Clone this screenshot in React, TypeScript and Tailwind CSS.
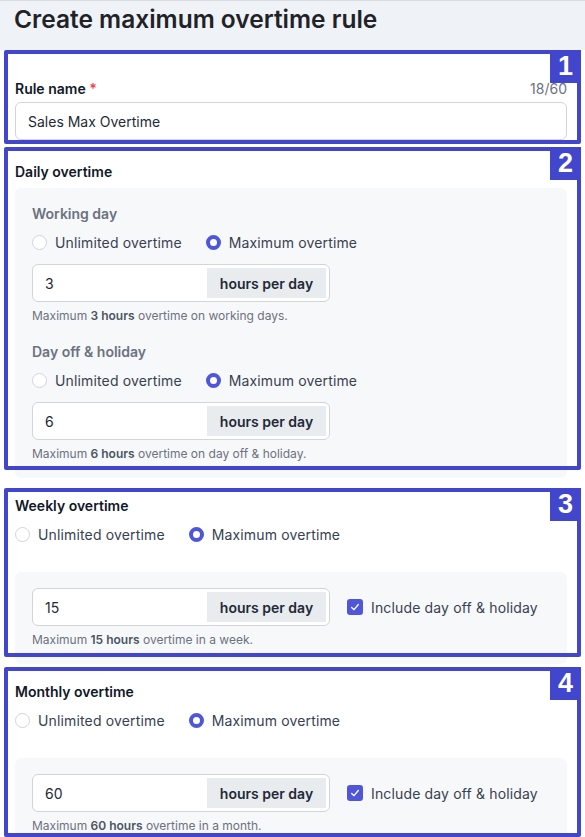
import React from 'react'

const Radio = ({ checked, label }: { checked?: boolean; label: string }) => (
  <label className="flex items-center gap-[8px] text-[14px] tracking-[0.15px] text-[#374151]">
    {checked ? (
      <span className="w-[15px] h-[15px] rounded-full border-[4.5px] border-[#4f56d9] bg-white" />
    ) : (
      <span className="w-[15px] h-[15px] rounded-full border border-[#d1d5db] bg-white" />
    )}
    {label}
  </label>
)

const RadioRow = () => (
  <div className="flex items-center gap-[24px] h-[20px]">
    <Radio label="Unlimited overtime" />
    <Radio checked label="Maximum overtime" />
  </div>
)

const HoursInput = ({ value }: { value: string }) => (
  <div className="flex items-stretch w-[298px] h-[38px] bg-white border border-[#d1d5db] rounded-[6px] p-[3px] pl-0">
    <div className="flex-1 flex items-center pl-[12px] text-[14px] text-[#1f2937]">{value}</div>
    <div className="w-[119px] flex items-center justify-center bg-[#e9ecef] text-[14px] font-semibold text-[#1f2937]">
      hours per day
    </div>
  </div>
)

const Help = ({ hours, rest }: { hours: string; rest: string }) => (
  <p className="mt-[6px] h-[16px] leading-[16px] text-[12px] text-[#6b7280]">
    Maximum <span className="font-semibold text-[#4b5563]">{hours} hours</span> {rest}
  </p>
)

const Checkbox = ({ label }: { label: string }) => (
  <label className="flex items-center gap-[8px] text-[14px] tracking-[0.15px] text-[#374151]">
    <span className="w-[16px] h-[16px] rounded-[3px] bg-[#4f56d9] flex items-center justify-center">
      <svg width="10" height="10" viewBox="0 0 12 12" fill="none">
        <path d="M2 6.5L4.8 9.2L10 3" stroke="white" strokeWidth="1.6" strokeLinecap="round" strokeLinejoin="round" />
      </svg>
    </span>
    {label}
  </label>
)

const Marker = ({ n, top, height }: { n: number; top: number; height: number }) => (
  <div
    className="absolute left-[4px] w-[577px] border-4 border-[#4146cc] rounded-[2px] pointer-events-none"
    style={{ top, height }}
  >
    <div className="absolute -top-[4px] -right-[4px] w-[31px] h-[33px] bg-[#4146cc] flex items-center justify-center text-white text-[27px] font-bold leading-none" style={{ fontFamily: '"Liberation Sans", Arial, sans-serif' }}>
      {n}
    </div>
  </div>
)

const PeriodSection = ({ title, value, rest }: { title: string; value: string; rest: string }) => (
  <div className="mt-[18px]">
    <h3 className="h-[20px] leading-[20px] text-[14px] font-semibold text-[#111827]">{title}</h3>
    <div className="mt-[8px]">
      <RadioRow />
    </div>
    <div className="mt-[28px] bg-[#f7f8fa] rounded-[6px] px-[17px] pt-[16px] pb-[16px]">
      <div className="flex items-center gap-[17px]">
        <HoursInput value={value} />
        <Checkbox label="Include day off & holiday" />
      </div>
      <Help hours={value} rest={rest} />
    </div>
  </div>
)

export default function App() {
  return (
    <div className="relative w-[585px] h-[837px] overflow-hidden bg-white" style={{ fontFamily: 'Inter, "Noto Sans", sans-serif' }}>
      <div className="h-[50px] bg-[#eff2f7] border-t border-[#d9dde3] px-[14px] pt-[3px]">
        <h1 className="text-[24.5px] leading-[30px] font-semibold text-[#1f2328]">Create maximum overtime rule</h1>
      </div>

      <div className="px-[15px] pr-[18px]">
        {/* rule name */}
        <div className="pt-[28px]">
          <div className="flex justify-between items-center h-[20px]">
            <span className="text-[14px] font-semibold text-[#111827]">
              Rule name <span className="text-[#ef4444]">*</span>
            </span>
            <span className="text-[14px] text-[#6b7280]">18/60</span>
          </div>
          <div className="mt-[4px] h-[38px] border border-[#d1d5db] rounded-[6px] flex items-center px-[12px] text-[14px] text-[#1f2937]">
            Sales Max Overtime
          </div>
        </div>

        {/* daily */}
        <div className="mt-[22px]">
          <h3 className="h-[20px] leading-[20px] text-[14px] font-semibold text-[#111827]">Daily overtime</h3>
          <div className="mt-[6px] bg-[#f7f8fa] rounded-[6px] px-[17px] pt-[16px] pb-[16px]">
            <h4 className="h-[20px] leading-[20px] text-[14px] font-semibold text-[#6b7280]">Working day</h4>
            <div className="mt-[8px]">
              <RadioRow />
            </div>
            <div className="mt-[12px]">
              <HoursInput value="3" />
            </div>
            <Help hours="3" rest="overtime on working days." />

            <h4 className="mt-[18px] h-[20px] leading-[20px] text-[14px] font-semibold text-[#6b7280]">Day off &amp; holiday</h4>
            <div className="mt-[8px]">
              <RadioRow />
            </div>
            <div className="mt-[12px]">
              <HoursInput value="6" />
            </div>
            <Help hours="6" rest="overtime on day off & holiday." />
          </div>
        </div>

        <PeriodSection title="Weekly overtime" value="15" rest="overtime in a week." />
        <PeriodSection title="Monthly overtime" value="60" rest="overtime in a month." />
      </div>

      <Marker n={1} top={50} height={94} />
      <Marker n={2} top={147} height={323} />
      <Marker n={3} top={488} height={169} />
      <Marker n={4} top={667} height={170} />
    </div>
  )
}
